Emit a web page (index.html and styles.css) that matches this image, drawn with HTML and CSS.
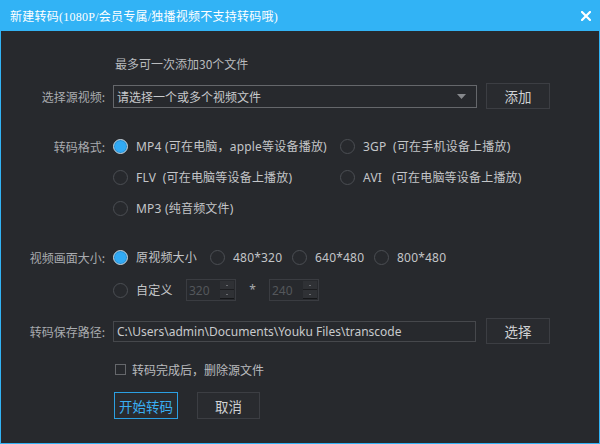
FILE: index.html
```html
<!DOCTYPE html>
<html lang="zh-CN">
<head>
<meta charset="utf-8">
<title>新建转码</title>
<link rel="stylesheet" href="styles.css">
</head>
<body>
<div class="window">
  <div class="titlebar">
    <span class="title">新建转码(1080P/会员专属/独播视频不支持转码哦)</span>
    <svg class="close" width="10" height="10" viewBox="0 0 10 10"><path d="M1 1 L9 9 M9 1 L1 9" stroke="#fff" stroke-width="2.2" stroke-linecap="square" fill="none"/></svg>
  </div>
  <div class="content">
    <div class="row hint-row">
      <div class="label"></div>
      <div class="hint">最多可一次添加30个文件</div>
    </div>
    <div class="row tall r-source">
      <div class="label">选择源视频:</div>
      <div class="select">
        <span class="select-text">请选择一个或多个视频文件</span>
        <svg class="arrow" width="9" height="5" viewBox="0 0 9 5"><path d="M0 0 H9 L4.5 5 Z" fill="#86888c"/></svg>
      </div>
      <div class="btn">添加</div>
    </div>
    <div class="row r-fmt1">
      <div class="label">转码格式:</div>
      <div class="opt col1"><span class="radio on"></span><span class="txt">MP4 (可在电脑，apple等设备播放)</span></div>
      <div class="opt"><span class="radio"></span><span class="txt">3GP  (可在手机设备上播放)</span></div>
    </div>
    <div class="row r-fmt">
      <div class="label"></div>
      <div class="opt col1"><span class="radio"></span><span class="txt">FLV  (可在电脑等设备上播放)</span></div>
      <div class="opt"><span class="radio"></span><span class="txt">AVI   (可在电脑等设备上播放)</span></div>
    </div>
    <div class="row r-fmt">
      <div class="label"></div>
      <div class="opt"><span class="radio"></span><span class="txt">MP3 (纯音频文件)</span></div>
    </div>
    <div class="row r-size1">
      <div class="label">视频画面大小:</div>
      <div class="opt w97"><span class="radio on"></span><span class="txt">原视频大小</span></div>
      <div class="opt w82"><span class="radio"></span><span class="txt">480*320</span></div>
      <div class="opt w82"><span class="radio"></span><span class="txt">640*480</span></div>
      <div class="opt"><span class="radio"></span><span class="txt">800*480</span></div>
    </div>
    <div class="row r-size2">
      <div class="label"></div>
      <div class="opt w73"><span class="radio"></span><span class="txt">自定义</span></div>
      <div class="spin">
        <span class="spin-val">320</span>
        <span class="spin-btns"><span class="up"></span><span class="down"></span></span>
      </div>
      <span class="times">*</span>
      <div class="spin">
        <span class="spin-val">240</span>
        <span class="spin-btns"><span class="up"></span><span class="down"></span></span>
      </div>
    </div>
    <div class="row tall r-path">
      <div class="label">转码保存路径:</div>
      <div class="input">C:\Users\admin\Documents\Youku Files\transcode</div>
      <div class="btn btn-path">选择</div>
    </div>
    <div class="row r-check">
      <div class="label"></div>
      <span class="checkbox"></span>
      <span class="txt">转码完成后，删除源文件</span>
    </div>
    <div class="row r-actions">
      <div class="label"></div>
      <div class="btn primary">开始转码</div>
      <div class="btn cancel">取消</div>
    </div>
  </div>
</div>
</body>
</html>
```
FILE: styles.css
```css
* {
  box-sizing: border-box;
  margin: 0;
  padding: 0;
}

html, body {
  margin: 0;
  width: 600px;
  height: 444px;
  overflow: hidden;
  background: #27292d;
}

body {
  font-family: "Noto Sans", "Noto Sans CJK SC", sans-serif;
  font-size: 12px;
  color: #c3c5c8;
}

.window {
  width: 600px;
  height: 444px;
  border: 1px solid #32b3f5;
  border-top: none;
  background: #27292d;
  display: flex;
  flex-direction: column;
}

.titlebar {
  height: 31px;
  flex: none;
  background: #32b3f5;
  display: flex;
  align-items: center;
  justify-content: space-between;
  padding: 0 8px 0 9px;
}

.title {
  color: #ffffff;
  font-family: "Liberation Serif", "Noto Sans CJK SC", serif;
  font-size: 12px;
  letter-spacing: 0.25px;
  white-space: nowrap;
}

.close {
  display: block;
}

.content {
  padding-top: 20px;
  display: flex;
  flex-direction: column;
}

.row {
  display: flex;
  align-items: center;
  height: 24px;
  flex: none;
}

.row.tall {
  height: 26px;
}

.label {
  width: 104px;
  margin-right: 8px;
  flex: none;
  text-align: right;
  color: #a9abaf;
  font-family: "Noto Sans CJK SC", sans-serif;
  white-space: nowrap;
}

.hint {
  color: #b9bbbe;
  padding-left: 2px;
  font-family: "Noto Sans CJK SC", sans-serif;
}

.r-source { margin-top: 8px; }
.r-fmt1 { margin-top: 25px; }
.r-fmt { margin-top: 7px; }
.r-size1 { margin-top: 25px; }
.r-size2 { margin-top: 9px; }
.r-path { margin-top: 16px; }
.r-check { margin-top: 13px; }
.r-actions { margin-top: 11px; height: 27px; }

.select {
  width: 364px;
  height: 23px;
  border: 1px solid #65676b;
  display: flex;
  align-items: center;
  justify-content: space-between;
  padding: 0 10px 0 3px;
  color: #c8cacc;
  font-family: "Noto Sans CJK SC", sans-serif;
}

.arrow {
  display: block;
}

.btn {
  width: 64px;
  height: 26px;
  margin-left: 9px;
  border: 1px solid #3c3e43;
  background: #292b2f;
  display: flex;
  align-items: center;
  justify-content: center;
  color: #d0d2d4;
  font-family: "Noto Sans CJK SC", sans-serif;
  font-size: 13.5px;
  flex: none;
}

.btn-path {
  margin-left: 10px;
}

.opt {
  display: flex;
  align-items: center;
  white-space: pre;
  flex: none;
}

.col1 { width: 227px; }
.w97 { width: 97px; }
.w82 { width: 82px; }
.w73 { width: 73px; }

.radio {
  width: 15px;
  height: 15px;
  border-radius: 50%;
  border: 1.5px solid #4b4e53;
  margin-right: 8px;
  flex: none;
}

.radio.on {
  border: 1px solid #c9ccd0;
  background: #31aaf5;
  box-shadow: inset 0 0 0 1px #2a8fd0;
}

.txt {
  color: #c3c5c8;
  white-space: pre;
  letter-spacing: 0.2px;
}

.spin {
  width: 50px;
  height: 22px;
  border: 1px solid #3a3c41;
  display: flex;
  align-items: stretch;
  justify-content: space-between;
  padding: 1px 1px 1px 2px;
}

.spin-val {
  color: #54575b;
  display: flex;
  align-items: center;
  font-size: 12px;
}

.spin-btns {
  width: 14px;
  display: flex;
  flex-direction: column;
}

.spin-btns .up,
.spin-btns .down {
  flex: 1;
  position: relative;
  background: #2f3135;
}

.spin-btns .up {
  border-bottom: 1px solid #1c1d20;
}

.spin-btns .down {
  border-bottom: 1px solid #151618;
}

.spin-btns .up::after,
.spin-btns .down::after {
  content: "";
  position: absolute;
  left: 6px;
  top: 4px;
  width: 2px;
  height: 1px;
  background: #6a6c70;
}

.times {
  width: 33px;
  text-align: center;
  color: #a9abaf;
  align-self: flex-start;
  padding-top: 3px;
}

.input {
  width: 363px;
  height: 21px;
  border: 1px solid #46484c;
  display: flex;
  align-items: center;
  padding-left: 3px;
  color: #c8cacc;
  white-space: nowrap;
  overflow: hidden;
}

.checkbox {
  width: 11px;
  height: 11px;
  border: 1px solid #65676b;
  margin-left: 2px;
  margin-right: 6px;
  flex: none;
}

.r-check .txt {
  font-family: "Noto Sans CJK SC", sans-serif;
  color: #b9bbbe;
  letter-spacing: 0;
}

.r-actions .btn {
  height: 27px;
}

.btn.primary {
  margin-left: 1px;
  width: 64px;
  border-color: #2b9fe2;
  color: #3aaef2;
}

.btn.cancel {
  margin-left: 19px;
  width: 63px;
  color: #d0d2d4;
}
```
